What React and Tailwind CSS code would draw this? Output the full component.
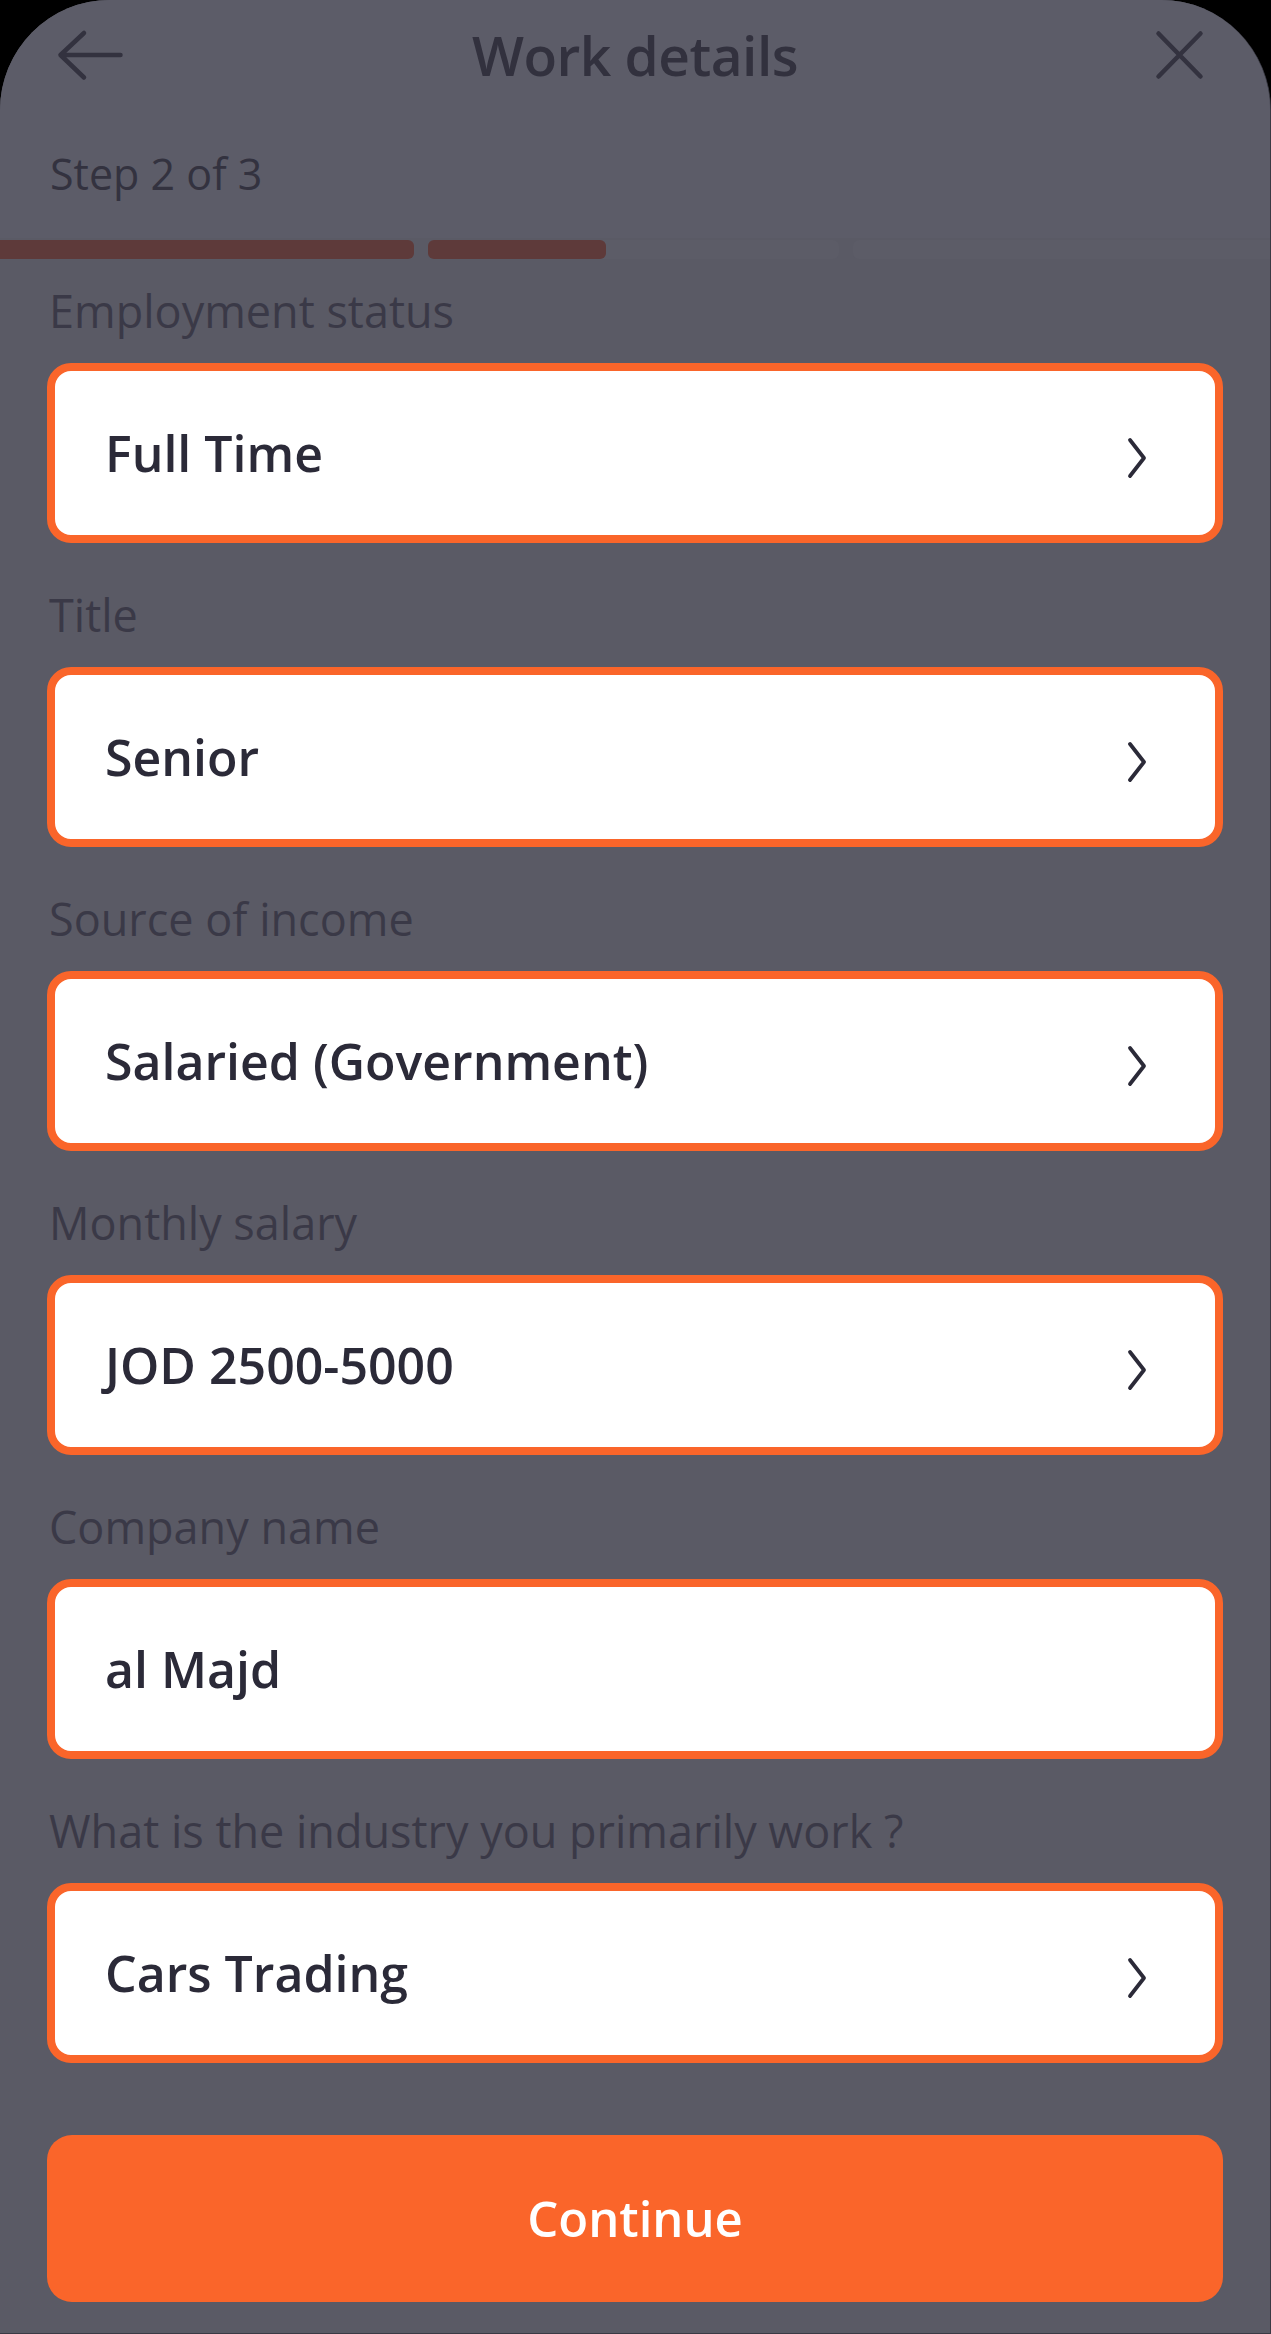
import React from "react";

const fields = [
  { label: "Employment status", value: "Full Time", chevron: true },
  { label: "Title", value: "Senior", chevron: true },
  { label: "Source of income", value: "Salaried (Government)", chevron: true },
  { label: "Monthly salary", value: "JOD 2500-5000", chevron: true },
  { label: "Company name", value: "al Majd", chevron: false },
  { label: "What is the industry you primarily work ?", value: "Cars Trading", chevron: true },
];

function Chevron() {
  return (
    <svg width="22" height="44" viewBox="0 0 22 44" fill="none" className="mt-[10px] shrink-0">
      <path d="M4 4 L18 22 L4 40" stroke="#2b2a38" strokeWidth="3.8" strokeLinecap="round" strokeLinejoin="round" />
    </svg>
  );
}

export default function App() {
  return (
    <div className="w-full h-[2334px] bg-black font-['Open_Sans','Noto_Sans',sans-serif]">
      <div className="h-full bg-[#5a5a65] rounded-t-[110px] border-r border-b border-[#3a3a44] flex flex-col overflow-hidden">
        <div className="bg-[#5c5c68] h-[238px] flex flex-col">
          <div className="grid grid-cols-[1fr_auto_1fr] items-center px-[56px] pt-[17px]">
            <svg width="68" height="52" viewBox="0 0 68 52" fill="none">
              <path d="M28 4 L4.5 26 L28 48.5 M4.5 26 H64.5" stroke="#33323f" strokeWidth="4.5" strokeLinecap="round" strokeLinejoin="round" />
            </svg>
            <div className="text-[55px] leading-[76px] font-semibold text-[#32313e] tracking-[-0.5px]">Work details</div>
            <div className="flex justify-end">
              <svg width="60" height="52" viewBox="0 0 60 52" fill="none">
                <path d="M4.5 4.5 L46.5 47.5 M46.5 4.5 L4.5 47.5" stroke="#33323f" strokeWidth="4.5" strokeLinecap="round" />
              </svg>
            </div>
          </div>
          <div className="mt-[55px] px-[50px] text-[43px] leading-[52px] text-[#33323f]">Step 2 of 3</div>
        </div>

        <div className="mt-[2px] flex gap-[14px] h-[19px]">
          <div className="w-[414px] h-full bg-[#5e3a3a] rounded-r-[6px]" />
          <div className="w-[411px] h-full bg-[#5c5c67] rounded-[6px] flex">
            <div className="w-[178px] h-full bg-[#5e3a3a] rounded-[6px]" />
          </div>
          <div className="flex-1 h-full bg-[#5c5c67] rounded-l-[6px]" />
        </div>

        <div className="px-[47px] pt-[25px] flex flex-col">
          {fields.map((f, i) => (
            <div key={i} className={i === 0 ? "flex flex-col" : "flex flex-col mt-[45px]"}>
              <div className="text-[45px] leading-[54px] text-[#3a3947] mb-[25px] pl-[2px] whitespace-nowrap">{f.label}</div>
              <div className="h-[180px] rounded-[24px] border-[8px] border-[#fa652a] bg-white flex items-center justify-between pl-[50px] pr-[67px]">
                <span className="text-[50px] font-semibold text-[#2b2a38] whitespace-nowrap">{f.value}</span>
                {f.chevron && <Chevron />}
              </div>
            </div>
          ))}
        </div>

        <div className="px-[47px] mt-[72px]">
          <div className="h-[167px] rounded-[25px] bg-[#fa652a] flex items-center justify-center">
            <span className="text-[49px] font-semibold text-white">Continue</span>
          </div>
        </div>
      </div>
    </div>
  );
}
